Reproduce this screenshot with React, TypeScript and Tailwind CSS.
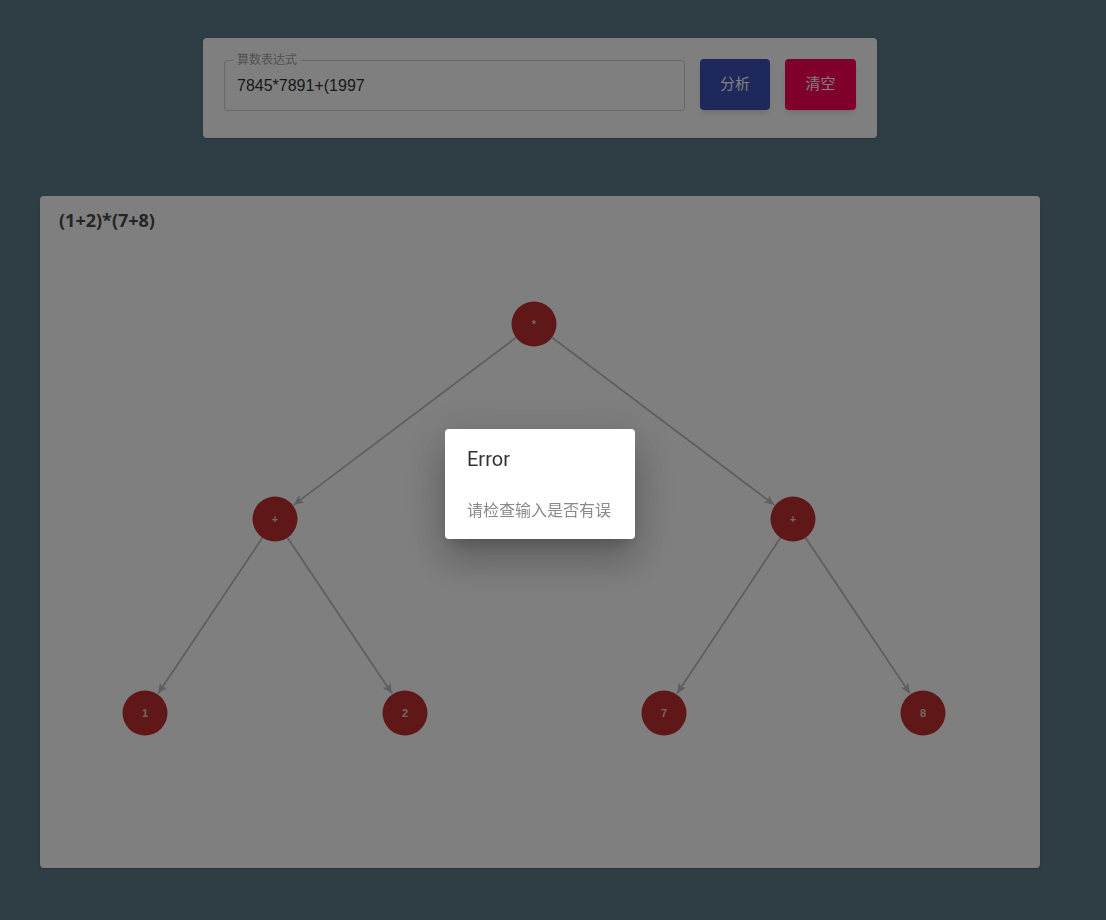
import React from "react";

const nodes = [
  { x: 494, y: 128, t: "*" },
  { x: 235, y: 323, t: "+" },
  { x: 753, y: 323, t: "+" },
  { x: 105, y: 517, t: "1" },
  { x: 365, y: 517, t: "2" },
  { x: 624, y: 517, t: "7" },
  { x: 883, y: 517, t: "8" },
];
const edges = [
  [0, 1],
  [0, 2],
  [1, 3],
  [1, 4],
  [2, 5],
  [2, 6],
];
const R = 22.5;

function Tree() {
  return (
    <svg className="absolute inset-0" width="1000" height="672" viewBox="0 0 1000 672">
      <defs>
        <marker id="arr" viewBox="0 0 12 12" refX="11" refY="6" markerWidth="12" markerHeight="12" markerUnits="userSpaceOnUse" orient="auto">
          <path d="M1,1.5 L11,6 L1,10.5 L3.5,6 z" fill="#bdbdbd" />
        </marker>
      </defs>
      {edges.map(([a, b], i) => {
        const p = nodes[a];
        const c = nodes[b];
        const dx = c.x - p.x;
        const dy = c.y - p.y;
        const L = Math.hypot(dx, dy);
        const ux = dx / L;
        const uy = dy / L;
        return (
          <line
            key={i}
            x1={p.x + ux * R}
            y1={p.y + uy * R}
            x2={c.x - ux * (R + 1)}
            y2={c.y - uy * (R + 1)}
            stroke="#bdbdbd"
            strokeWidth="1.8"
            markerEnd="url(#arr)"
          />
        );
      })}
      {nodes.map((n, i) => (
        <g key={i}>
          <circle cx={n.x} cy={n.y} r={R} fill="#c02f2f" />
          <text
            x={n.x}
            y={n.y + 4}
            textAnchor="middle"
            fontSize="11"
            fontWeight="bold"
            fill="#ffffff"
            fillOpacity="0.75"
            fontFamily="'Liberation Sans', sans-serif"
          >
            {n.t}
          </text>
        </g>
      ))}
    </svg>
  );
}

export default function App() {
  return (
    <div className="relative min-h-screen bg-[#5e7a8a] pt-[38px] font-['Roboto','Noto_Sans_CJK_SC',sans-serif]">
      <div className="ml-[40px] w-[1000px]">
        <div className="mx-auto flex w-[674px] h-[100px] items-start gap-[15px] rounded bg-white px-[21px] pt-[21px] shadow">
          <fieldset className="relative -mt-[6px] h-[58px] flex-1 rounded border border-[#d0d0d0] px-[12px]">
            <legend className="ml-[-4px] px-[4px] text-[12px] leading-[14px] text-[#a4a4a4]">算数表达式</legend>
            <div className="pt-[8px] text-[16px] leading-[22px] text-[#333] font-['Liberation_Sans',sans-serif]">7845*7891+(1997</div>
          </fieldset>
          <button className="h-[51px] w-[70px] rounded bg-[#3f51b5] text-[15px] text-white shadow-md">分析</button>
          <button className="h-[51px] w-[71px] rounded bg-[#ff0057] text-[15px] text-white shadow-md">清空</button>
        </div>
        <div className="relative mt-[58px] h-[672px] w-[1000px] rounded bg-white shadow">
          <div className="px-[19px] pt-[12px] text-[18px] font-bold leading-[24px] text-[#4a4a4a] font-['Open_Sans','Noto_Sans',sans-serif]">
            (1+2)*(7+8)
          </div>
          <Tree />
        </div>
      </div>
      <div className="fixed inset-0 bg-black/50" />
      <div className="fixed left-[445px] top-[429px] h-[110px] w-[190px] rounded bg-white px-[22px] pt-[16px] shadow-[0_11px_15px_-7px_rgba(0,0,0,0.2),0_24px_38px_3px_rgba(0,0,0,0.14),0_9px_46px_8px_rgba(0,0,0,0.12)]">
        <div className="text-[20px] leading-[28px] text-[#333] font-['Roboto','Liberation_Sans',sans-serif]">Error</div>
        <div className="mt-[26px] whitespace-nowrap text-[16px] leading-[20px] text-[#8a8a8a] font-['Noto_Sans_CJK_SC',sans-serif]">请检查输入是否有误</div>
      </div>
    </div>
  );
}
